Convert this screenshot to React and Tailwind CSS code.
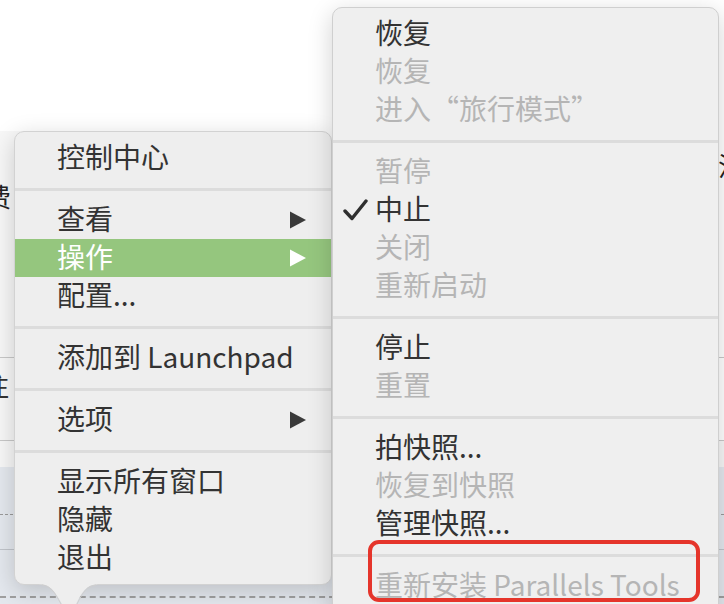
const font = { fontFamily: '"Noto Sans CJK SC", "Noto Sans", sans-serif' };

const leftMenu = [
  { label: '控制中心' },
  { sep: true },
  { label: '查看', sub: true },
  { label: '操作', sub: true, active: true },
  { label: '配置...' },
  { sep: true },
  { label: '添加到 Launchpad' },
  { sep: true },
  { label: '选项', sub: true },
  { sep: true },
  { label: '显示所有窗口' },
  { label: '隐藏' },
  { label: '退出' },
];

const rightMenu = [
  { label: '恢复' },
  { label: '恢复', off: true },
  { label: '进入“旅行模式”', off: true },
  { sep: true },
  { label: '暂停', off: true },
  { label: '中止', checked: true },
  { label: '关闭', off: true },
  { label: '重新启动', off: true },
  { sep: true },
  { label: '停止' },
  { label: '重置', off: true },
  { sep: true },
  { label: '拍快照...' },
  { label: '恢复到快照', off: true },
  { label: '管理快照...' },
  { sep: true },
  { label: '重新安装 Parallels Tools', off: true },
];

const Arrow = ({ white }) => (
  <svg width="18" height="18" viewBox="0 0 18 18" className="absolute right-[24px]">
    <path d="M1 0.5 L17 9 L1 17.5 Z" fill={white ? '#ffffff' : '#3a3a3a'} />
  </svg>
);

const Check = () => (
  <svg width="26" height="22" viewBox="0 0 26 22" className="absolute left-[10px]">
    <path d="M2 12 L9 19.5 L23 2" fill="none" stroke="#2f2f2f" strokeWidth="3.4" strokeLinecap="round" strokeLinejoin="round" />
  </svg>
);

const MenuRows = ({ items }) =>
  items.map((item, i) =>
    item.sep ? (
      <div key={i} className="h-[24px] flex items-center">
        <div className="w-full h-[3px] bg-[#dcdcdc]" />
      </div>
    ) : (
      <div
        key={i}
        className={`relative h-[38px] flex items-center pl-[42px] text-[28px] leading-[38px] whitespace-nowrap ${
          item.active ? 'bg-[#95c67e] text-white' : item.off ? 'text-[#b5b5b5]' : 'text-[#333333]'
        }`}
      >
        {item.checked && <Check />}
        <span className="-translate-y-[2px]">{item.label}</span>
        {item.sub && <Arrow white={item.active} />}
      </div>
    )
  );

// window behind the menus: a list with rows, only its edges show
const Backdrop = () => (
  <div className="flex flex-col w-full h-full text-[26px] leading-none text-[#222]">
    <div className="h-[357px] flex justify-between bg-white">
      <div className="w-[20px] mt-[131px] h-[226px] bg-[#f7f7f7] overflow-hidden">
        <span className="block -ml-[15px] mt-[52px]">费</span>
      </div>
      <div className="w-[12px] mt-[150px] overflow-hidden">
        <span className="block ml-[6px] mt-[2px]">注</span>
      </div>
    </div>
    <div className="h-[1px] bg-[#c8c8c8]" />
    <div className="h-[82px] flex justify-between bg-white">
      <div className="w-[20px] bg-[#f7f7f7] overflow-hidden">
        <span className="block -ml-[17px] mt-[14px] text-[#333]">注</span>
      </div>
    </div>
    <div className="h-[1px] bg-[#c8c8c8]" />
    <div className="h-[26px] bg-[#f7f7f7]" />
    <div className="flex-1 flex flex-col bg-[#e4e8ee]">
      <div className="h-[47px]" />
      <div className="border-t border-dashed border-[#9a9a9a]" />
      <div className="h-[34px]" />
      <div className="h-[1px] bg-[#c0c4ca]" />
      <div className="h-[46px]" />
      <div className="border-t-2 border-dashed border-[#a0a0a0]" />
    </div>
  </div>
);

export default function App() {
  return (
    <div className="relative w-[724px] h-[604px] overflow-hidden bg-white" style={font}>
      <Backdrop />

      {/* left context menu */}
      <div className="absolute left-[14px] top-[131px] w-[318px] rounded-[10px] bg-[#eeeeee] border border-[#d2d2d2] py-[7px] shadow-[0_6px_24px_rgba(0,0,0,0.18)]">
        <MenuRows items={leftMenu} />
      </div>
      <svg width="80" height="24" viewBox="0 0 80 24" className="absolute left-[30px] top-[582px]">
        <path d="M8 2 C20 2 24 8 32 22 L46 22 C52 10 56 3 68 2 Z" fill="#eeeeee" />
        <path d="M12 3 C20 3.5 24 9 31 22 M47 22 C53 10 57 4 66 3" fill="none" stroke="#cfcfcf" strokeWidth="1" />
      </svg>

      {/* submenu */}
      <div className="absolute left-[332px] top-[7px] w-[387px] h-[620px] rounded-[10px] bg-[#efefef] border border-[#cfcfcf] py-[7px] shadow-[0_6px_24px_rgba(0,0,0,0.18)]">
        <MenuRows items={rightMenu} />
      </div>

      {/* annotation */}
      <div className="absolute left-[368px] top-[540px] w-[332px] h-[62px] border-[4px] border-[#e5352b] rounded-[11px]" />
    </div>
  );
}
